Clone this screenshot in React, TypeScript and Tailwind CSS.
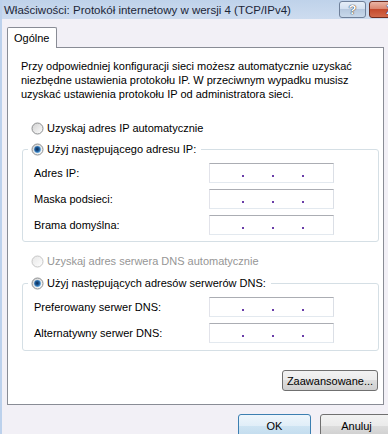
import React from "react";

const F = "font-['Liberation_Sans',Arial,sans-serif]";

function Radio({ checked = false, disabled = false, id }: { checked?: boolean; disabled?: boolean; id: string }) {
  return (
    <svg width="13" height="13" viewBox="0 0 13 13" className="shrink-0">
      <defs>
        <linearGradient id={`${id}-f`} x1="0" y1="0" x2="1" y2="1">
          <stop offset="0" stopColor={disabled ? "#e6e6e6" : "#cfcfcf"} />
          <stop offset="1" stopColor="#ffffff" />
        </linearGradient>
        <radialGradient id={`${id}-d`} cx="0.45" cy="0.45" r="0.6">
          <stop offset="0" stopColor="#0f2c52" />
          <stop offset="0.55" stopColor="#1f5e9e" />
          <stop offset="1" stopColor="#7cc2f2" />
        </radialGradient>
      </defs>
      <circle cx="6.5" cy="6.5" r="5.5" fill={`url(#${id}-f)`} stroke={disabled ? "#c6c6c6" : "#8c8e90"} />
      {checked && <circle cx="6.5" cy="6.5" r="3.4" fill={`url(#${id}-d)`} />}
    </svg>
  );
}

function IpBox() {
  return (
    <div className="w-[125px] h-[20px] shrink-0 bg-white border border-[#e3e9ef] border-t-[#abadb3] border-l-[#e2e3ea] border-r-[#dbdfe6] flex items-end pb-[5px] pl-[32px] gap-[28px]">
      <span className="w-[2px] h-[2px] bg-[#6a3da8]" />
      <span className="w-[2px] h-[2px] bg-[#6a3da8]" />
      <span className="w-[2px] h-[2px] bg-[#6a3da8]" />
    </div>
  );
}

function Row({ label }: { label: string }) {
  return (
    <div className="flex items-center h-[20px]">
      <div className="w-[175px] shrink-0 text-black">{label}</div>
      <IpBox />
    </div>
  );
}

function Group({ title, id, rows, pb }: { title: string; id: string; rows: string[]; pb: string }) {
  return (
    <fieldset className={`ml-[14px] w-[357px] border border-[#d5dfe5] rounded-[3px] ${pb}`}>
      <legend className="ml-[5px] pl-[3px] pr-[5px]">
        <div className="flex items-center gap-[3px] h-[16px] text-black">
          <Radio checked id={id} />
          <span>{title}</span>
        </div>
      </legend>
      <div className="pl-[11px] pt-[6px] flex flex-col gap-[6px]">
        {rows.map((r) => (
          <Row key={r} label={r} />
        ))}
      </div>
    </fieldset>
  );
}

const vistaBtn =
  "bg-[linear-gradient(to_bottom,#f2f2f2_0%,#ebebeb_50%,#dddddd_50%,#cfcfcf_100%)] border border-[#707070] rounded-[3px]";

export default function App() {
  return (
    <div className={`${F} text-[11px] leading-[14px] w-[388px] h-[434px] overflow-hidden bg-[#f2f0f6] border-l-2 border-[#bcd1ec] flex flex-col`}>
      {/* title bar */}
      <div className="h-[19px] shrink-0 flex items-start bg-[linear-gradient(to_bottom,#bfd2ea,#cddcef)]">
        <div className="pl-[2px] h-[19px] flex items-center text-[11.5px] text-[#1c2638] whitespace-nowrap flex-1">
          Właściwości: Protokół internetowy w wersji 4 (TCP/IPv4)
        </div>
        <div className="flex gap-[3px] mt-[1px] mr-[-24px] shrink-0">
          <div className="w-[27px] h-[17px] rounded-[3px] border border-[#6f809a] bg-[linear-gradient(to_bottom,#e6eef7_0%,#d2dff0_50%,#b7c9df_50%,#c8d8ea_100%)] flex items-center justify-center text-white font-bold text-[13px] [text-shadow:0_0_1px_#222,0_0_1px_#222]">
            ?
          </div>
          <div className="w-[43px] h-[17px] rounded-[3px] border border-[#6e2b1f] bg-[linear-gradient(to_bottom,#eab4a4_0%,#d9826b_50%,#c44a2d_50%,#d2694b_100%)] flex items-center justify-center text-white font-bold text-[13px] [text-shadow:0_0_1px_#222,0_0_1px_#222]">
            X
          </div>
        </div>
      </div>

      {/* tab */}
      <div className="mt-[8px] ml-[5px] flex relative z-10 -mb-[1px]">
        <div className="h-[21px] w-[50px] bg-white border border-b-0 border-[#898c95] rounded-t-[2px] pl-[6px] flex items-center text-black">
          Ogólne
        </div>
      </div>

      {/* panel */}
      <div className="ml-[5px] w-[377px] bg-white border border-[#898c95] flex flex-col pb-[13px]">
        <p className="pl-[13px] pt-[11px] whitespace-nowrap text-black">
          Przy odpowiedniej konfiguracji sieci możesz automatycznie uzyskać
          <br />
          niezbędne ustawienia protokołu IP. W przeciwnym wypadku musisz
          <br />
          uzyskać ustawienia protokołu IP od administratora sieci.
        </p>

        <div className="mt-[19px] ml-[23px] h-[16px] flex items-center gap-[3px] text-black">
          <Radio id="r1" />
          <span>Uzyskaj adres IP automatycznie</span>
        </div>

        <div className="mt-[5px]">
          <Group
            id="r2"
            title="Użyj następującego adresu IP:"
            rows={["Adres IP:", "Maska podsieci:", "Brama domyślna:"]}
            pb="pb-[6px]"
          />
        </div>

        <div className="mt-[11px] ml-[23px] h-[16px] flex items-center gap-[3px] text-[#969696]">
          <Radio id="r3" disabled />
          <span>Uzyskaj adres serwera DNS automatycznie</span>
        </div>

        <div className="mt-[6px]">
          <Group
            id="r4"
            title="Użyj następujących adresów serwerów DNS:"
            rows={["Preferowany serwer DNS:", "Alternatywny serwer DNS:"]}
            pb="pb-[7px]"
          />
        </div>

        <div className="mt-[19px] flex justify-end pr-[5px]">
          <div className={`${vistaBtn} w-[96px] h-[21px] flex items-center justify-center text-black`}>
            Zaawansowane...
          </div>
        </div>
      </div>

      {/* bottom buttons */}
      <div className="mt-[9px] pl-[236px] flex gap-[9px] shrink-0">
        <div className="w-[73px] h-[23px] shrink-0 rounded-[3px] border border-[#3c7fb1] bg-[linear-gradient(to_bottom,#eef6fc_0%,#e1eef8_50%,#cfe4f3_50%,#c2dcee_100%)] flex items-center justify-center text-black">
          OK
        </div>
        <div className={`${vistaBtn} w-[73px] h-[23px] shrink-0 flex items-center justify-center text-black`}>
          Anuluj
        </div>
      </div>
    </div>
  );
}
